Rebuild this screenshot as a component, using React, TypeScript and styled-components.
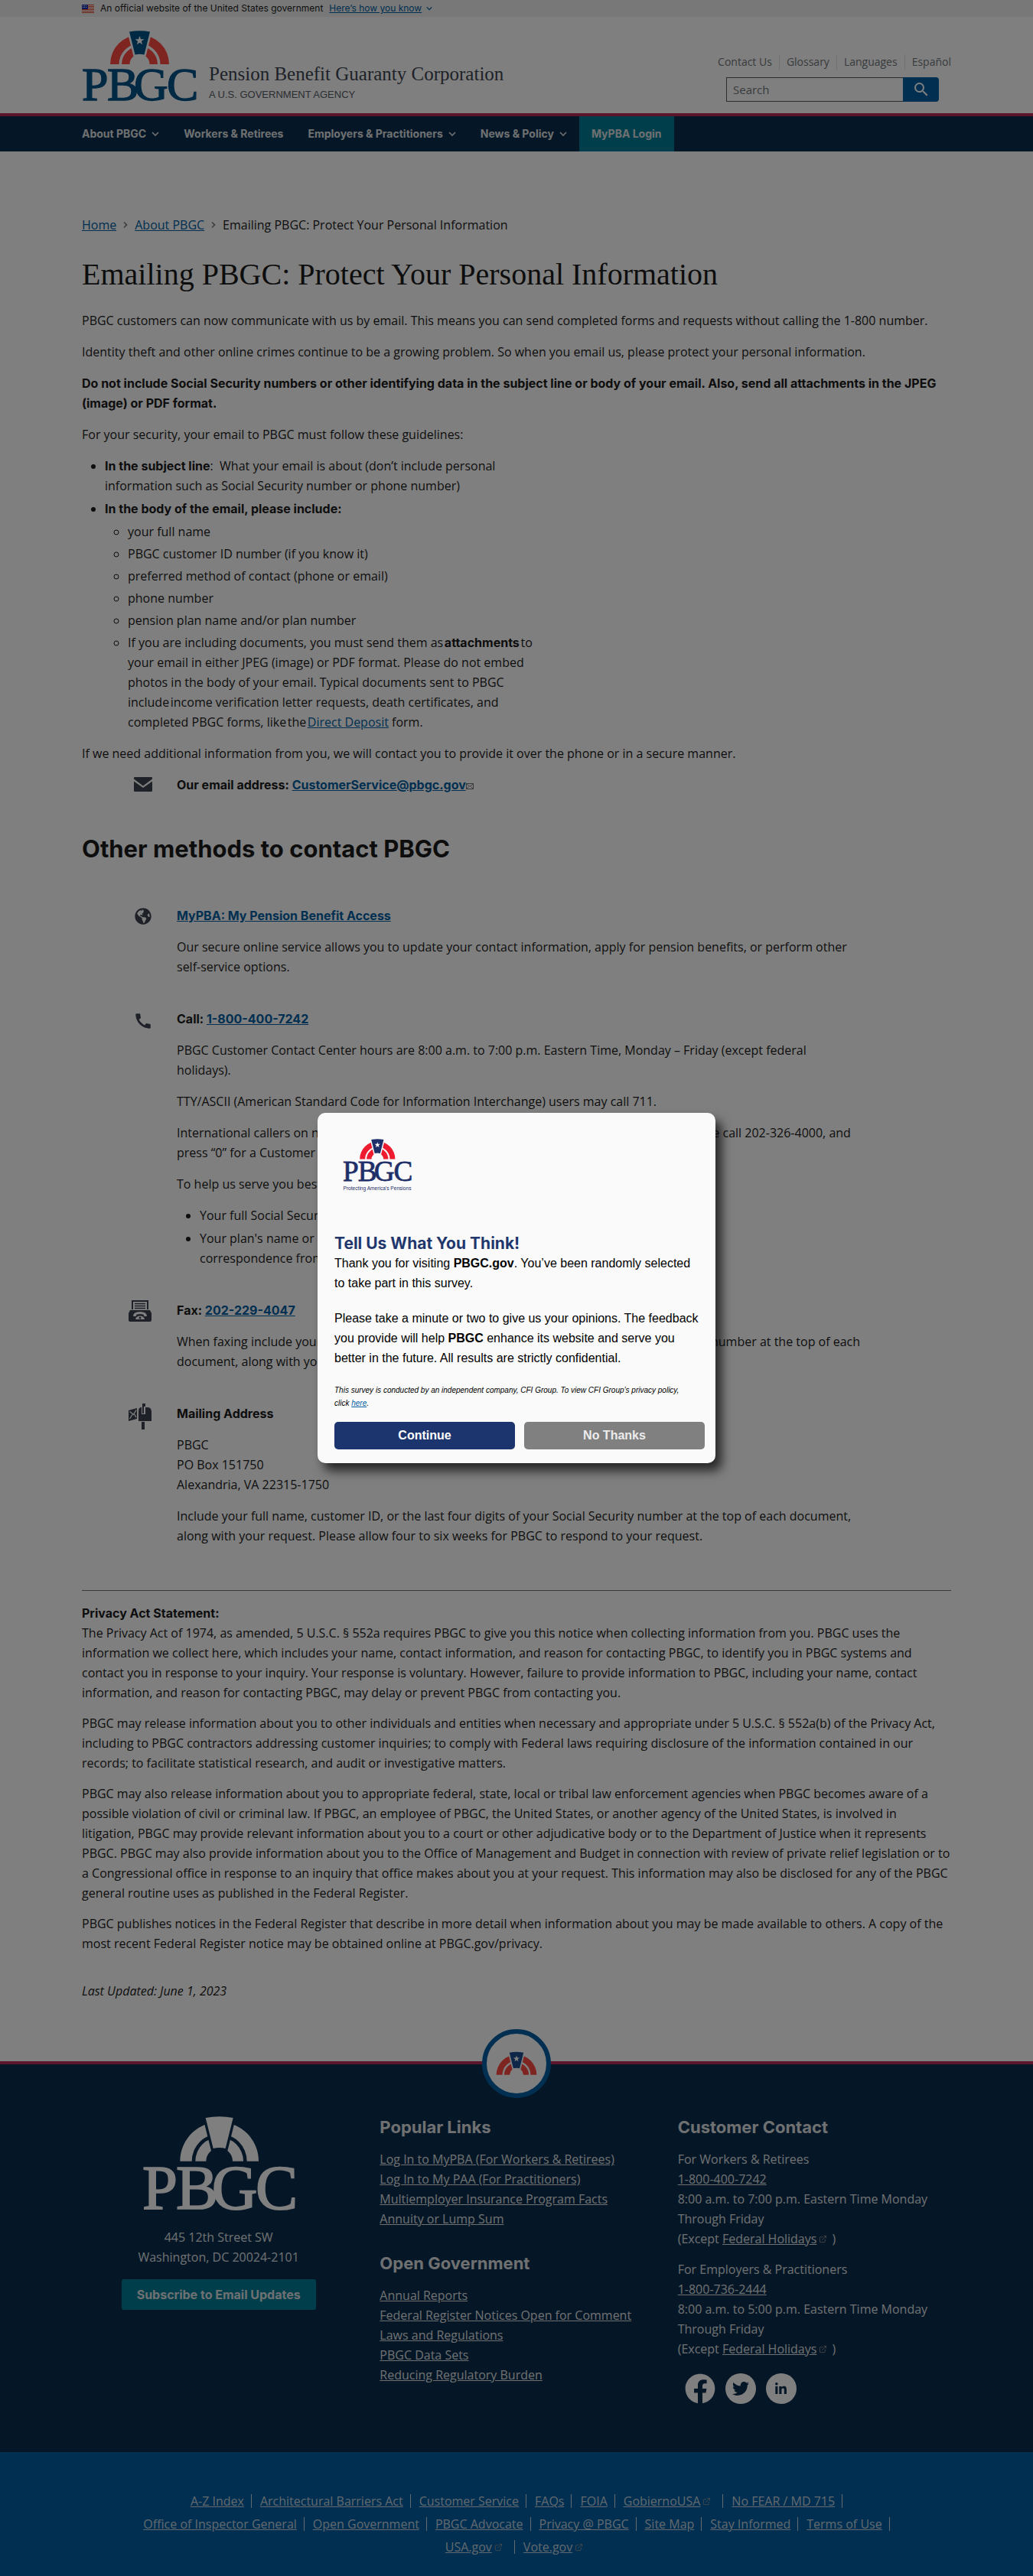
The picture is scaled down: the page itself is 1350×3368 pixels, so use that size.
import React from "react";
import styled, { createGlobalStyle, css } from "styled-components";
import { FaGlobeAmericas, FaFacebook, FaTwitter, FaLinkedinIn } from "react-icons/fa";
import { MdCall, MdSearch } from "react-icons/md";
import { FiExternalLink } from "react-icons/fi";

const text = `"Open Sans", "Noto Sans", sans-serif`;
const strongText = `Inter, "Open Sans", sans-serif`;
const serif = `"Liberation Serif", "Times New Roman", serif`;
const arial = `"Liberation Sans", Arial, sans-serif`;

const color = {
  ink: "#1b1b1b",
  link: "#005ea2",
  navy: "#0b2c4e",
  blue: "#005ea2",
  teal: "#007d98",
  red: "#b92d56",
  pale: "#dfe1e2",
  muted: "#71767a",
};

const GlobalStyle = createGlobalStyle`
  *, *::before, *::after { box-sizing: border-box; }
  body {
    margin: 0;
    background: #ffffff;
    color: ${color.ink};
    font: 400 16px/26px ${text};
  }
  p, ul, h1, h2, h3, address { margin: 0; padding: 0; }
  address { font-style: normal; }
  button, input { font: inherit; }
`;

const Page = styled.div`
  position: relative;
`;

const Container = styled.div`
  max-width: 1200px;
  margin: 0 auto;
  padding: 0 32px;
`;

const Link = styled.a`
  color: ${color.link};
  text-decoration: underline;
`;

const Bold = styled.strong`
  font: 700 16px/16px ${strongText};
`;

/* ---------- Logo ---------- */

const star = Array.from({ length: 10 }, (_, i) => {
  const r = i % 2 ? 2.5 : 6.2;
  const a = (Math.PI / 5) * i - Math.PI / 2;
  return `${(75.5 + r * Math.cos(a)).toFixed(2)},${(13.2 + r * Math.sin(a)).toFixed(2)}`;
}).join(" ");

const LogoSvg = styled.svg<{ $width: number }>`
  display: block;
  flex: none;
  width: ${(p) => p.$width}px;
  height: auto;
  overflow: visible;
`;

type LogoProps = {
  width: number;
  arch: string;
  ink: string;
  ground: string;
  showStar?: boolean;
  part?: "full" | "arch" | "tagline";
};

const boxes = { full: "0 0 150 93", arch: "36 -1 79 46", tagline: "0 0 150 120" };

function Logo({ width, arch, ink, ground, showStar = true, part = "full" }: LogoProps) {
  return (
    <LogoSvg $width={width} viewBox={boxes[part]} role="img" aria-label="PBGC">
      <path fill={arch} d="M37 44a38.5 38.5 0 0 1 77 0h-11.500a27 27 0 0 0 -54 0z" />
      <path fill={arch} d="M52 44a23.500 23.500 0 0 1 47 0h-10.500a13 13 0 0 0 -26 0z" />
      <path
        fill={ink}
        stroke={ground}
        strokeWidth="5"
        paintOrder="stroke"
        d="M62 1.500Q75.500 -1 89 1.500L81.500 31.500Q75.500 30 69.500 31.500z"
      />
      {showStar && <polygon fill="#fff" points={star} />}
      {part !== "arch" && (
        <text x="0 33 68 111" y="91" fill={ink} stroke={ink} strokeWidth="1.300" fontFamily={serif} fontSize="62">
          PBGC
        </text>
      )}
      {part === "tagline" && (
        <text x="75" y="111" textAnchor="middle" fill={ink} fontFamily={arial} fontSize="11">
          Protecting America’s Pensions
        </text>
      )}
    </LogoSvg>
  );
}

/* ---------- Small icons ---------- */

const CaretSvg = styled.svg<{ $size: number; $weight: number }>`
  width: ${(p) => p.$size}px;
  height: ${(p) => p.$size}px;
  fill: none;
  stroke: currentColor;
  stroke-width: ${(p) => p.$weight};
`;

const CaretDown = ({ size = 10 }: { size?: number }) => (
  <CaretSvg $size={size} $weight={1.6} viewBox="0 0 10 10" aria-hidden>
    <path d="M1 3l4 4 4-4" />
  </CaretSvg>
);

const CaretRight = () => (
  <CaretSvg $size={10} $weight={1.6} viewBox="0 0 10 10" aria-hidden>
    <path d="M3 1.500l3.500 3.500-3.500 3.500" />
  </CaretSvg>
);

const ExternalIcon = styled(FiExternalLink)`
  width: 11px;
  height: 11px;
  margin: 0 6px 0 3px;
  color: #8d9297;
`;

const FlagIcon = () => (
  <svg width="16" height="11" viewBox="0 0 16 11" aria-hidden>
    <rect width="16" height="11" fill="#fff" />
    <path d="M0 .5h16M0 2.500h16M0 4.500h16M0 6.500h16M0 8.500h16M0 10.500h16" stroke="#db3e1f" />
    <rect width="8" height="6" fill="#1e33b1" />
    <path d="M1 1.500h6M1 3.500h6" stroke="#fff" strokeDasharray="1 1" />
  </svg>
);

const MailIcon = () => (
  <svg width="24" height="19" viewBox="0 0 24 19" fill="#3d4551" aria-hidden>
    <path d="M1 0h22a1 1 0 0 1 1 1v1.500L12 11.500 0 2.500V1a1 1 0 0 1 1-1z" />
    <path d="M0 5.500l12 8.500 12-8.500V18a1 1 0 0 1-1 1H1a1 1 0 0 1-1-1z" />
  </svg>
);

const FaxIcon = () => (
  <svg width="30" height="28" viewBox="0 0 30 28" aria-hidden>
    <path d="M5 12V1h20v11" fill="none" stroke="#3d4551" strokeWidth="2" />
    <path d="M8 4.500h14M8 7.500h14M8 10.500h14" stroke="#3d4551" strokeWidth="1.500" />
    <path d="M2 13h26l2 4v9a2 2 0 0 1-2 2H2a2 2 0 0 1-2-2v-9z" fill="#3d4551" />
    <path d="M6 21q0-6 9-6t9 6h-4v-2q-5-2-10 0v2z" fill="#fff" />
    <path d="M9 25q1-4.500 6-4.500t6 4.500z" fill="#fff" />
    <circle cx="15" cy="23" r="1.500" fill="#3d4551" />
  </svg>
);

const MailboxIcon = () => (
  <svg width="30" height="34" viewBox="0 0 30 34" aria-hidden>
    <path d="M18 0h4v4h-2v9h-2z" fill="#3d4551" />
    <path d="M13 10q0-5 4-5v9h5V5h3q5 0 5 6v12H13z" fill="#3d4551" />
    <path d="M17 24h4v10h-4z" fill="#3d4551" />
    <path d="M0 9l11-3v14l-11 3z" fill="#3d4551" />
    <path d="M1.500 10.500l5 4 3.500-6M1.500 20l3.500-5.500M10 18l-2.500-4" fill="none" stroke="#fff" strokeWidth="1.300" />
  </svg>
);

/* ---------- Banner ---------- */

const Banner = styled.div`
  background: #f0f0f0;
  font: 400 12px/22px ${strongText};
`;

const BannerRow = styled(Container)`
  display: flex;
  align-items: center;
  gap: 8px;
`;

const BannerToggle = styled.button`
  display: inline-flex;
  align-items: center;
  gap: 6px;
  padding: 0;
  border: 0;
  background: none;
  color: ${color.link};
  span { text-decoration: underline; }
`;

/* ---------- Header ---------- */

const HeaderRow = styled(Container)`
  display: flex;
  align-items: flex-end;
  justify-content: space-between;
  padding-top: 18px;
  padding-bottom: 15px;
`;

const Brand = styled.a`
  display: flex;
  align-items: flex-end;
  gap: 16px;
  color: #3d4551;
  text-decoration: none;
`;

const BrandName = styled.div`
  font: 400 25px/32px ${serif};
`;

const BrandNote = styled.div`
  padding-top: 2px;
  font-size: 13px;
  line-height: 18px;
  text-transform: uppercase;
  font-family: ${arial};
  color: #565c65;
`;

const HeaderTools = styled.div`
  display: flex;
  flex-direction: column;
  gap: 10px;
`;

const UtilityNav = styled.nav`
  display: flex;
  justify-content: flex-end;
  font-size: 14px;
  line-height: 20px;
  a {
    padding: 0 9px;
    color: ${color.muted};
    text-decoration: none;
  }
  a + a { border-left: 1px solid ${color.pale}; }
  a:last-child { padding-right: 0; }
`;

const SearchForm = styled.form`
  display: flex;
  width: 278px;
  height: 32px;
  margin: 0 16px 0 auto;
`;

const SearchInput = styled.input`
  flex: 1;
  min-width: 0;
  padding: 0 8px;
  border: 1px solid #565c65;
  border-right: 0;
  border-radius: 0;
  background: #fff;
  font-size: 15px;
  &::placeholder { color: ${color.muted}; opacity: 1; }
`;

const SearchButton = styled.button`
  display: flex;
  align-items: center;
  justify-content: center;
  width: 47px;
  padding: 0;
  border: 0;
  border-radius: 0 4px 4px 0;
  background: ${color.blue};
  color: #fff;
  font-size: 24px;
`;

const MainNav = styled.nav`
  border-top: 4px solid ${color.red};
  background: ${color.navy};
`;

const NavRow = styled(Container)`
  display: flex;
  padding: 0 16px;
`;

const navItem = css<{ $accent?: boolean }>`
  display: flex;
  align-items: center;
  gap: 7px;
  height: 46px;
  padding: 0 16px;
  border: 0;
  background: ${(p) => (p.$accent ? color.teal : "none")};
  color: ${color.pale};
  font: 700 14px/20px ${strongText};
  text-decoration: none;
`;

const NavLink = styled.a<{ $accent?: boolean }>`${navItem}`;
const NavMenu = styled.button<{ $accent?: boolean }>`${navItem}`;

/* ---------- Main content ---------- */

const Main = styled(Container).attrs({ as: "main" })`
  padding-top: 83px;
  padding-bottom: 79px;
`;

const Breadcrumb = styled.nav`
  display: flex;
  align-items: center;
  gap: 7px;
  svg { color: ${color.muted}; }
`;

const PageTitle = styled.h1`
  margin: 28px 0 23px;
  font: 400 40px/48px ${serif};
`;

const Stack = styled.div<{ $gap?: number }>`
  display: flex;
  flex-direction: column;
  gap: ${(p) => p.$gap ?? 15}px;
`;

const Bullets = styled.ul<{ $nested?: boolean; $gap?: number }>`
  max-width: 600px;
  padding-left: 30px;
  padding-top: ${(p) => (p.$nested ? 4 : 0)}px;
  list-style: ${(p) => (p.$nested ? "circle" : "disc")};
  li + li { margin-top: ${(p) => p.$gap ?? 4}px; }
`;

const WideBullets = styled(Bullets)`
  max-width: none;
`;

const Contact = styled.section`
  display: grid;
  grid-template-columns: 32px minmax(0, 896px);
  column-gap: 32px;
  padding-left: 60px;
`;

const ContactIcon = styled.div<{ $wide?: boolean }>`
  display: flex;
  align-items: flex-start;
  justify-content: center;
  padding-top: ${(p) => (p.$wide ? 0 : 3)}px;
  padding-left: ${(p) => (p.$wide ? 0 : 8)}px;
  color: #3d4551;
  font-size: 22px;
  svg { flex: none; }
`;

const SectionTitle = styled.h2`
  margin: 52px 0 55px;
  font: 700 31px/38px ${strongText};
`;

const Rule = styled.hr`
  height: 1px;
  margin: 58px 0 16px;
  border: 0;
  background: ${color.muted};
`;

const Updated = styled.p`
  margin-top: 36px;
  font-style: italic;
`;

/* ---------- Footer ---------- */

const Footer = styled.footer`
  position: relative;
  border-top: 4px solid ${color.red};
  background: ${color.navy};
  color: ${color.pale};
  a { color: inherit; }
`;

const TopBadge = styled.a`
  position: absolute;
  top: -46px;
  left: 50%;
  margin-left: -45px;
  display: flex;
  align-items: center;
  justify-content: center;
  width: 90px;
  height: 90px;
  border: 6px solid ${color.blue};
  border-radius: 50%;
  background: #fff;
`;

const FooterGrid = styled(Container)`
  display: grid;
  grid-template-columns: repeat(3, minmax(0, 1fr));
  gap: 32px;
  padding-top: 68px;
  padding-bottom: 63px;
`;

const FooterBrand = styled.div`
  display: flex;
  flex-direction: column;
  align-items: center;
  text-align: center;
  address { margin: 21px 0 16px; }
`;

const Subscribe = styled.button`
  height: 40px;
  padding: 0 20px;
  border: 0;
  border-radius: 3px;
  background: ${color.teal};
  color: ${color.pale};
  font: 700 16px/20px ${strongText};
`;

const FooterTitle = styled.h3`
  margin-bottom: 15px;
  font: 700 22px/28px ${strongText};
`;

const FooterLinks = styled.ul`
  list-style: none;
`;

const Social = styled.div`
  display: flex;
  gap: 13px;
  padding: 5px 0 0 9px;
`;

const SocialLink = styled.a<{ $disc?: boolean }>`
  display: flex;
  align-items: center;
  justify-content: center;
  width: 40px;
  height: 40px;
  border-radius: 50%;
  background: ${(p) => (p.$disc ? "#fff" : "none")};
  && { color: ${(p) => (p.$disc ? color.navy : "#fff")}; }
  font-size: ${(p) => (p.$disc ? 22 : 40)}px;
`;

const Policies = styled.div`
  padding: 51px 32px 25px;
  background: ${color.blue};
  color: #c4d3df;
`;

const PolicyList = styled.ul`
  display: flex;
  flex-wrap: wrap;
  justify-content: center;
  gap: 4px 11px;
  max-width: 1012px;
  margin: 0 auto;
  list-style: none;
  li {
    display: flex;
    align-items: center;
  }
  li:not(:last-child)::after {
    content: "";
    width: 1px;
    height: 18px;
    margin-left: 9px;
    background: currentColor;
  }
`;

/* ---------- Survey dialog ---------- */

const Backdrop = styled.div`
  position: absolute;
  inset: 0;
  display: flex;
  align-items: center;
  justify-content: center;
  background: rgba(0, 0, 0, 0.5);
`;

const Dialog = styled.div`
  width: 520px;
  padding: 34px 14px 18px 22px;
  border-radius: 10px;
  background: #fafafa;
  box-shadow: 8px 10px 14px rgba(0, 0, 0, 0.7);
  color: #000;
  font: 400 16px/26px ${arial};
`;

const DialogLogo = styled.div`
  height: 124px;
  padding-left: 11px;
`;

const DialogTitle = styled.h2`
  font: 700 21px/26px ${strongText};
  color: #1f376d;
`;

const DialogText = styled(Stack)`
  padding-right: 6px;
`;

const FinePrint = styled.p`
  font-size: 10px;
  line-height: 17px;
  font-style: italic;
`;

const DialogActions = styled.div`
  display: grid;
  grid-template-columns: 1fr 1fr;
  gap: 12px;
  margin-top: 16px;
`;

const DialogButton = styled.button<{ $primary?: boolean }>`
  height: 36px;
  border: 0;
  border-radius: 5px;
  background: ${(p) => (p.$primary ? "#1d356e" : "#808080")};
  color: ${(p) => (p.$primary ? "#fff" : "#ececec")};
  font-weight: 700;
`;

const popular = [
  "Log In to MyPBA (For Workers & Retirees)",
  "Log In to My PAA (For Practitioners)",
  "Multiemployer Insurance Program Facts",
  "Annuity or Lump Sum",
];

const openGovernment = [
  "Annual Reports",
  "Federal Register Notices Open for Comment",
  "Laws and Regulations",
  "PBGC Data Sets",
  "Reducing Regulatory Burden",
];

const policies: { label: string; external?: boolean }[] = [
  { label: "A-Z Index" },
  { label: "Architectural Barriers Act" },
  { label: "Customer Service" },
  { label: "FAQs" },
  { label: "FOIA" },
  { label: "GobiernoUSA", external: true },
  { label: "No FEAR / MD 715" },
  { label: "Office of Inspector General" },
  { label: "Open Government" },
  { label: "PBGC Advocate" },
  { label: "Privacy @ PBGC" },
  { label: "Site Map" },
  { label: "Stay Informed" },
  { label: "Terms of Use" },
  { label: "USA.gov", external: true },
  { label: "Vote.gov", external: true },
];

const LinkList = ({ items }: { items: string[] }) => (
  <FooterLinks>
    {items.map((item) => (
      <li key={item}>
        <a href="#">{item}</a>
      </li>
    ))}
  </FooterLinks>
);

const Hours = ({ who, phone, until }: { who: string; phone: string; until: string }) => (
  <p>
    For {who}
    <br />
    <a href={`tel:${phone}`}>{phone}</a>
    <br />
    8:00 a.m. to {until} p.m. Eastern Time Monday Through Friday
    <br />
    (Except <a href="#">Federal Holidays</a>
    <ExternalIcon />)
  </p>
);

export default function App() {
  return (
    <Page>
      <GlobalStyle />
      <Banner>
        <BannerRow>
          <FlagIcon />
          <span>An official website of the United States government</span>
          <BannerToggle type="button">
            <span>Here’s how you know</span>
            <CaretDown size={8} />
          </BannerToggle>
        </BannerRow>
      </Banner>

      <header>
        <HeaderRow>
          <Brand href="#">
            <Logo width={150} arch="#ff4a42" ink="#005288" ground="#fff" />
            <div>
              <BrandName>Pension Benefit Guaranty Corporation</BrandName>
              <BrandNote>A U.S. Government Agency</BrandNote>
            </div>
          </Brand>
          <HeaderTools>
            <UtilityNav aria-label="Utility">
              <a href="#">Contact Us</a>
              <a href="#">Glossary</a>
              <a href="#">Languages</a>
              <a href="#">Español</a>
            </UtilityNav>
            <SearchForm role="search">
              <SearchInput type="search" placeholder="Search" aria-label="Search" />
              <SearchButton type="submit" aria-label="Search">
                <MdSearch />
              </SearchButton>
            </SearchForm>
          </HeaderTools>
        </HeaderRow>
        <MainNav>
          <NavRow>
            <NavMenu>About PBGC <CaretDown /></NavMenu>
            <NavLink href="#">Workers &amp; Retirees</NavLink>
            <NavMenu>Employers &amp; Practitioners <CaretDown /></NavMenu>
            <NavMenu>News &amp; Policy <CaretDown /></NavMenu>
            <NavLink href="#" $accent>MyPBA Login</NavLink>
          </NavRow>
        </MainNav>
      </header>

      <Main>
        <Breadcrumb aria-label="Breadcrumb">
          <Link href="#">Home</Link>
          <CaretRight />
          <Link href="#">About PBGC</Link>
          <CaretRight />
          <span>Emailing PBGC: Protect Your Personal Information</span>
        </Breadcrumb>
        <PageTitle>Emailing PBGC: Protect Your Personal Information</PageTitle>

        <Stack>
          <p>
            PBGC customers can now communicate with us by email. This means you can send completed forms and requests
            without calling the 1-800 number.
          </p>
          <p>
            Identity theft and other online crimes continue to be a growing problem. So when you email us, please
            protect your personal information.
          </p>
          <p>
            <Bold>
              Do not include Social Security numbers or other identifying data in the subject line or body of your
              email. Also, send all attachments in the JPEG (image) or PDF format.
            </Bold>
          </p>
          <p>For your security, your email to PBGC must follow these guidelines:</p>
          <Bullets>
            <li>
              <Bold>In the subject line</Bold>:&nbsp; What your email is about (don’t include personal information such
              as Social Security number or phone number)
            </li>
            <li>
              <Bold>In the body of the email, please include:</Bold>
              <Bullets $nested $gap={3}>
                <li>your full name</li>
                <li>PBGC customer ID number (if you know it)</li>
                <li>preferred method of contact (phone or email)</li>
                <li>phone number</li>
                <li>pension plan name and/or plan number</li>
                <li>
                  If you are including documents, you must send them as&#8202;<Bold>attachments</Bold>&#8202;to your
                  email in either JPEG (image) or PDF format. Please do not embed photos in the body of your email.
                  Typical documents sent to PBGC include&#8202;income verification letter requests, death certificates,
                  and completed PBGC forms, like&#8202;the&#8202;<Link href="#">Direct Deposit</Link> form.
                </li>
              </Bullets>
            </li>
          </Bullets>
          <p>
            If we need additional information from you, we will contact you to provide it over the phone or in a secure
            manner.
          </p>
          <Contact>
            <ContactIcon>
              <MailIcon />
            </ContactIcon>
            <p>
              <Bold>
                Our email address: <Link href="mailto:CustomerService@pbgc.gov">CustomerService@pbgc.gov</Link>
              </Bold>
              <svg width="10" height="8" viewBox="0 0 10 8" fill="none" stroke="#71767a" aria-hidden>
                <path d="M.5.5h9v7h-9zl4.500 4 4.500-4M.5 7.500l3-3M9.500 7.500l-3-3" />
              </svg>
            </p>
          </Contact>
        </Stack>

        <SectionTitle>Other methods to contact PBGC</SectionTitle>

        <Stack $gap={42}>
          <Contact>
            <ContactIcon>
              <FaGlobeAmericas />
            </ContactIcon>
            <Stack>
              <p>
                <Bold>
                  <Link href="#">MyPBA: My Pension Benefit Access</Link>
                </Bold>
              </p>
              <p>
                Our secure online service allows you to update your contact information, apply for pension benefits, or
                perform other self-service options.
              </p>
            </Stack>
          </Contact>
          <Contact>
            <ContactIcon>
              <MdCall size={26} />
            </ContactIcon>
            <Stack>
              <p>
                <Bold>
                  Call: <Link href="tel:1-800-400-7242">1-800-400-7242</Link>
                </Bold>
              </p>
              <p>
                PBGC Customer Contact Center hours are 8:00 a.m. to 7:00 p.m. Eastern Time, Monday – Friday (except
                federal holidays).
              </p>
              <p>TTY/ASCII (American Standard Code for Information Interchange) users may call 711.</p>
              <p>
                International callers on networks that do not support dialing of toll-free numbers should please call
                202-326-4000, and press “0” for a Customer Service Representative.
              </p>
              <p>To help us serve you best, please have ready:</p>
              <WideBullets>
                <li>Your full Social Security number</li>
                <li>
                  Your plan's name or number, which you can find on
                  <br />
                  correspondence from PBGC
                </li>
              </WideBullets>
            </Stack>
          </Contact>
          <Contact>
            <ContactIcon $wide>
              <FaxIcon />
            </ContactIcon>
            <Stack>
              <p>
                <Bold>
                  Fax: <Link href="tel:202-229-4047">202-229-4047</Link>
                </Bold>
              </p>
              <p>
                When faxing include your full name, customer ID, or the last four digits of your Social Security number
                at the top of each document, along with your request.
              </p>
            </Stack>
          </Contact>
          <Contact>
            <ContactIcon $wide>
              <MailboxIcon />
            </ContactIcon>
            <Stack>
              <p>
                <Bold>Mailing Address</Bold>
              </p>
              <address>
                PBGC
                <br />
                PO Box 151750
                <br />
                Alexandria, VA 22315-1750
              </address>
              <p>
                Include your full name, customer ID, or the last four digits of your Social Security number at the top
                of each document, along with your request. Please allow four to six weeks for PBGC to respond to your
                request.
              </p>
            </Stack>
          </Contact>
        </Stack>

        <Rule />

        <Stack $gap={14}>
          <p>
            <Bold>Privacy Act Statement:</Bold>
            <br />
            The Privacy Act of 1974, as amended, 5 U.S.C. § 552a requires PBGC to give you this notice when collecting
            information from you. PBGC uses the information we collect here, which includes your name, contact
            information, and reason for contacting PBGC, to identify you in PBGC systems and contact you in response to
            your inquiry. Your response is voluntary. However, failure to provide information to PBGC, including your
            name, contact information, and reason for contacting PBGC, may delay or prevent PBGC from contacting you.
          </p>
          <p>
            PBGC may release information about you to other individuals and entities when necessary and appropriate
            under 5 U.S.C. § 552a(b) of the Privacy Act, including to PBGC contractors addressing customer inquiries; to
            comply with Federal laws requiring disclosure of the information contained in our records; to facilitate
            statistical research, and audit or investigative matters.
          </p>
          <p>
            PBGC may also release information about you to appropriate federal, state, local or tribal law enforcement
            agencies when PBGC becomes aware of a possible violation of civil or criminal law. If PBGC, an employee of
            PBGC, the United States, or another agency of the United States, is involved in litigation, PBGC may provide
            relevant information about you to a court or other adjudicative body or to the Department of Justice when it
            represents PBGC. PBGC may also provide information about you to the Office of Management and Budget in
            connection with review of private relief legislation or to a Congressional office in response to an inquiry
            that office makes about you at your request. This information may also be disclosed for any of the PBGC
            general routine uses as published in the Federal Register.
          </p>
          <p>
            PBGC publishes notices in the Federal Register that describe in more detail when information about you may
            be made available to others. A copy of the most recent Federal Register notice may be obtained online at
            PBGC.gov/privacy.
          </p>
        </Stack>
        <Updated>Last Updated: June 1, 2023</Updated>
      </Main>

      <Footer>
        <TopBadge href="#" aria-label="Back to top">
          <Logo width={54} arch="#ff4a42" ink="#1d4f91" ground="#fff" part="arch" />
        </TopBadge>
        <FooterGrid>
          <FooterBrand>
            <Logo width={200} arch="#fff" ink="#fff" ground={color.navy} showStar={false} />
            <address>
              445 12th Street SW
              <br />
              Washington, DC 20024-2101
            </address>
            <Subscribe type="button">Subscribe to Email Updates</Subscribe>
          </FooterBrand>
          <Stack $gap={31}>
            <div>
              <FooterTitle>Popular Links</FooterTitle>
              <LinkList items={popular} />
            </div>
            <div>
              <FooterTitle>Open Government</FooterTitle>
              <LinkList items={openGovernment} />
            </div>
          </Stack>
          <div>
            <FooterTitle>Customer Contact</FooterTitle>
            <Stack $gap={14}>
              <Hours who="Workers & Retirees" phone="1-800-400-7242" until="7:00" />
              <Hours who="Employers & Practitioners" phone="1-800-736-2444" until="5:00" />
              <Social>
                <SocialLink href="#" aria-label="Facebook">
                  <FaFacebook />
                </SocialLink>
                <SocialLink href="#" aria-label="Twitter" $disc>
                  <FaTwitter />
                </SocialLink>
                <SocialLink href="#" aria-label="LinkedIn" $disc>
                  <FaLinkedinIn size={17} />
                </SocialLink>
              </Social>
            </Stack>
          </div>
        </FooterGrid>
        <Policies>
          <PolicyList>
            {policies.map((p) => (
              <li key={p.label}>
                <a href="#">{p.label}</a>
                {p.external && <ExternalIcon />}
              </li>
            ))}
          </PolicyList>
        </Policies>
      </Footer>

      <Backdrop>
        <Dialog role="dialog" aria-modal="true" aria-labelledby="survey-title">
          <DialogLogo>
            <Logo width={90} arch="#ee1c2e" ink="#1f2f69" ground="#fafafa" part="tagline" />
          </DialogLogo>
          <DialogTitle id="survey-title">Tell Us What You Think!</DialogTitle>
          <DialogText $gap={20}>
            <p>
              Thank you for visiting <b>PBGC.gov</b>. You’ve been randomly selected to take part in this survey.
            </p>
            <p>
              Please take a minute or two to give us your opinions. The feedback you provide will help <b>PBGC</b>{" "}
              enhance its website and serve you better in the future. All results are strictly confidential.
            </p>
            <FinePrint>
              This survey is conducted by an independent company, CFI Group. To view CFI Group’s privacy policy,
              <br />
              click <Link href="#">here</Link>.
            </FinePrint>
          </DialogText>
          <DialogActions>
            <DialogButton type="button" $primary>Continue</DialogButton>
            <DialogButton type="button">No Thanks</DialogButton>
          </DialogActions>
        </Dialog>
      </Backdrop>
    </Page>
  );
}
